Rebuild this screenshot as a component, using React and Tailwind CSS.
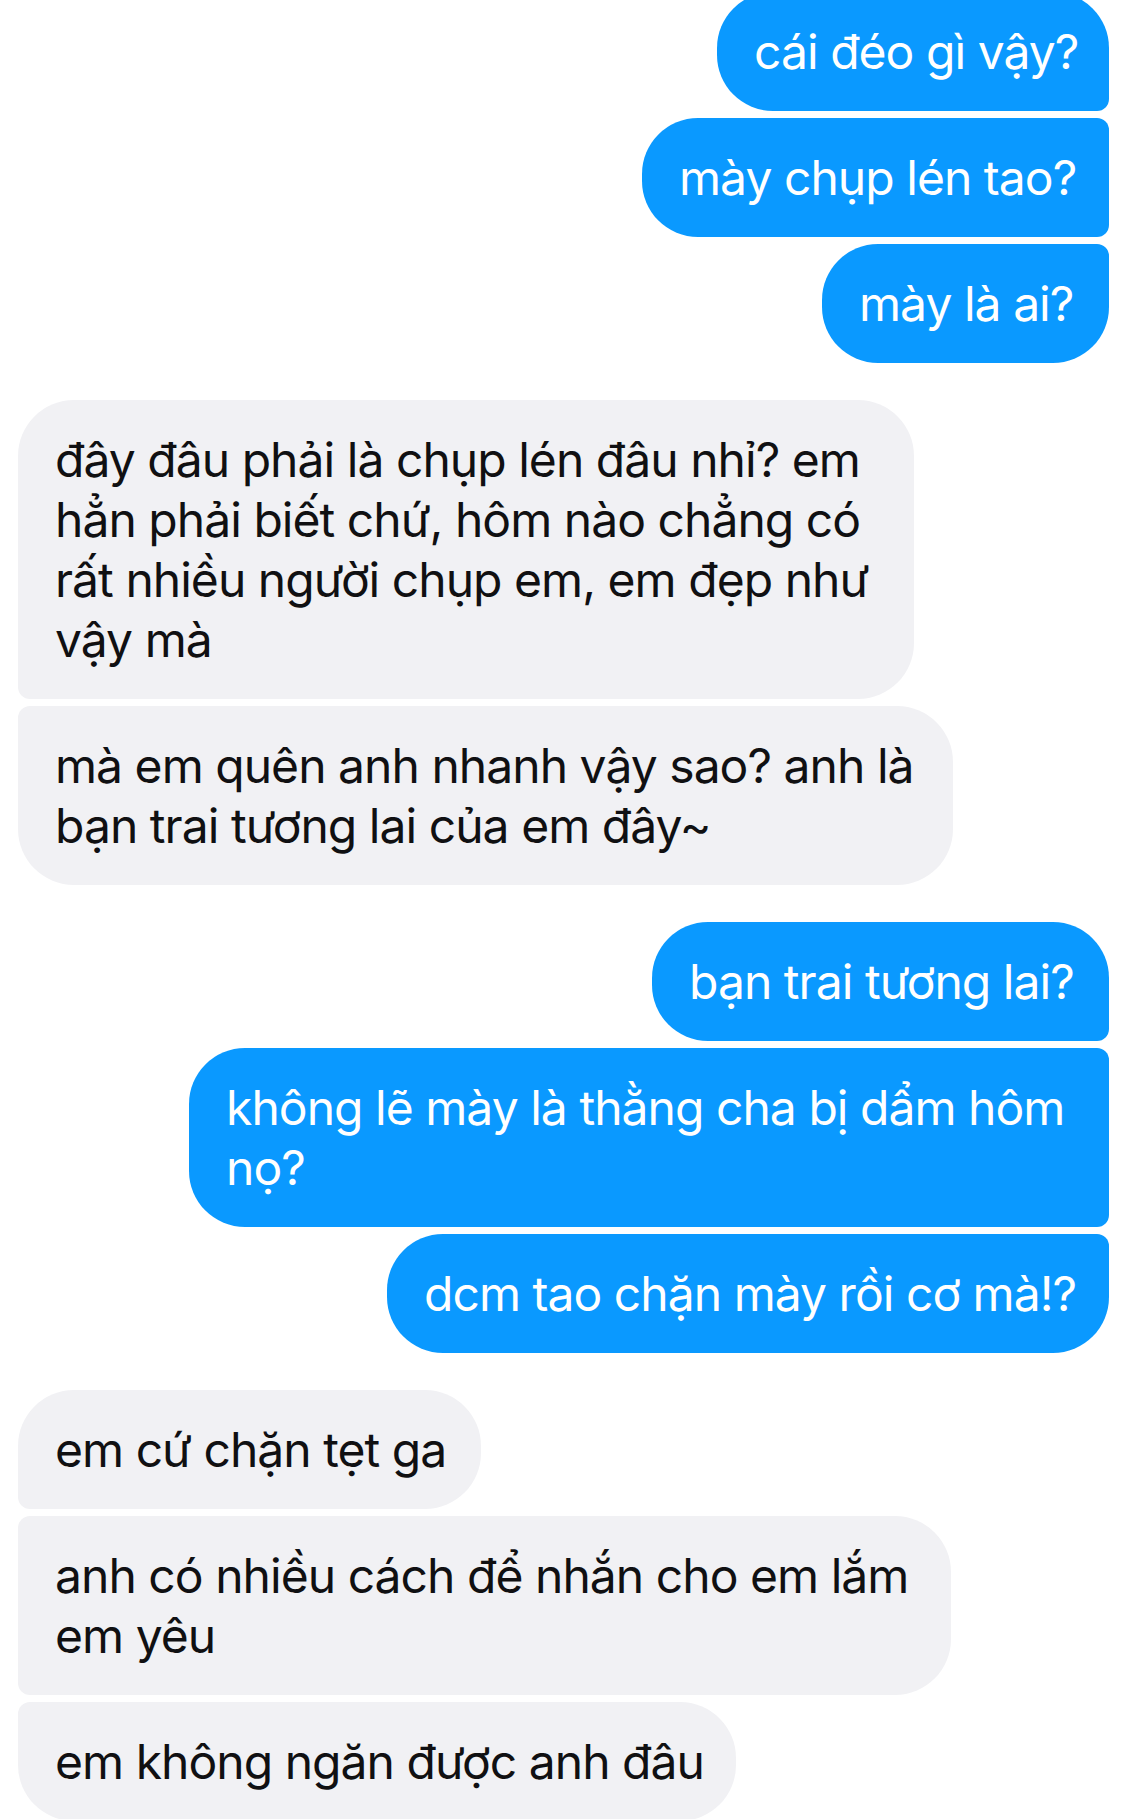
const blueShape = {
  first: 'rounded-l-[56px] rounded-tr-[56px] rounded-br-[12px]',
  middle: 'rounded-l-[56px] rounded-r-[12px]',
  last: 'rounded-l-[56px] rounded-tr-[12px] rounded-br-[56px]',
};

const grayShape = {
  first: 'rounded-r-[56px] rounded-tl-[56px] rounded-bl-[12px]',
  middle: 'rounded-r-[56px] rounded-l-[12px]',
  last: 'rounded-r-[56px] rounded-tl-[12px] rounded-bl-[56px]',
};

function Bubble({ mine, pos, width, children }) {
  const shape = mine ? blueShape[pos] : grayShape[pos];
  return (
    <div
      className={`${width} ${shape} px-[37px] py-[29.5px] text-[48px] leading-[60px] tracking-[-0.02em] whitespace-nowrap ${
        mine ? 'self-end bg-[#0a99ff] text-white' : 'self-start bg-[#f1f1f4] text-[#101012]'
      }`}
    >
      {children}
    </div>
  );
}

export default function App() {
  return (
    <div className="h-[1819px] w-[1134px] overflow-hidden bg-white font-['Inter','Roboto',sans-serif]">
      <div className="-mt-[8px] flex flex-col gap-[7px] pl-[18px] pr-[25px]">
        <Bubble mine pos="first" width="w-[392px]">cái đéo gì vậy?</Bubble>
        <Bubble mine pos="middle" width="w-[467px]">mày chụp lén tao?</Bubble>
        <Bubble mine pos="last" width="w-[287px]">mày là ai?</Bubble>

        <div className="mt-[30px] flex flex-col gap-[7px]">
          <Bubble pos="first" width="w-[896px]">
            đây đâu phải là chụp lén đâu nhỉ? em
            <br />
            hẳn phải biết chứ, hôm nào chẳng có
            <br />
            rất nhiều người chụp em, em đẹp như
            <br />
            vậy mà
          </Bubble>
          <Bubble pos="last" width="w-[935px]">
            mà em quên anh nhanh vậy sao? anh là
            <br />
            bạn trai tương lai của em đây~
          </Bubble>
        </div>

        <div className="mt-[30px] flex flex-col gap-[7px]">
          <Bubble mine pos="first" width="w-[457px]">bạn trai tương lai?</Bubble>
          <Bubble mine pos="middle" width="w-[920px]">
            không lẽ mày là thằng cha bị dẩm hôm
            <br />
            nọ?
          </Bubble>
          <Bubble mine pos="last" width="w-[722px]">dcm tao chặn mày rồi cơ mà!?</Bubble>
        </div>

        <div className="mt-[30px] flex flex-col gap-[7px]">
          <Bubble pos="first" width="w-[463px]">em cứ chặn tẹt ga</Bubble>
          <Bubble pos="middle" width="w-[933px]">
            anh có nhiều cách để nhắn cho em lắm
            <br />
            em yêu
          </Bubble>
          <Bubble pos="last" width="w-[718px]">em không ngăn được anh đâu</Bubble>
        </div>
      </div>
    </div>
  );
}
